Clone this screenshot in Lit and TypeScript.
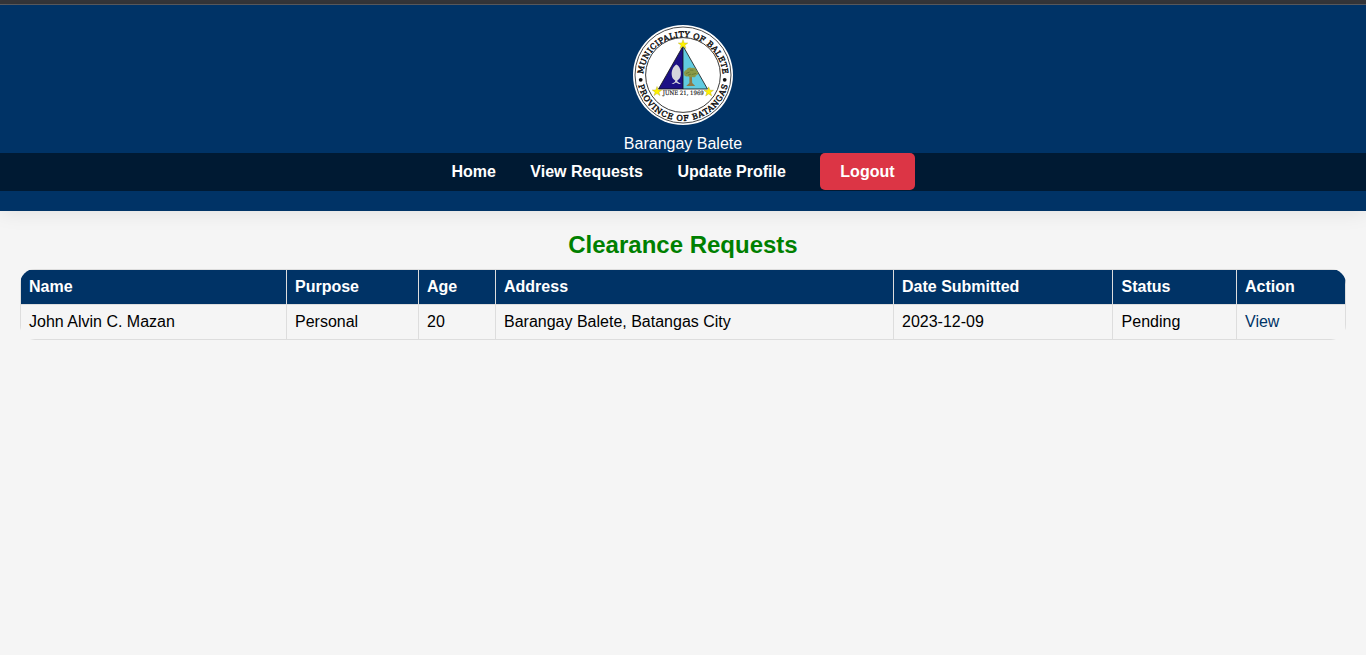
import { LitElement, html, css, svg } from "lit";
import { customElement } from "lit/decorators.js";

const star = (x: number, y: number) => svg`
  <path transform="translate(${x} ${y})" fill="#fff200" stroke="#a39b20" stroke-width=".35"
    d="M0-5 1.2-1.6 4.8-1.5 1.9.7 3 4.1 0 2.1-3 4.1-1.9.7-4.8-1.5-1.2-1.6Z"/>`;

@customElement("municipal-seal")
class MunicipalSeal extends LitElement {
  static styles = css`
    :host { display: block; width: 100px; height: 100px; }
    svg { display: block; }
    .ring { font: 7.8px "DejaVu Serif", serif; fill: #111; stroke: #111; stroke-width: 0.45px; }
    .date { font: 6px "DejaVu Serif", serif; fill: #111; stroke: #111; stroke-width: 0.15px; }
  `;
  render() {
    return html`<svg width="100" height="100" viewBox="0 0 100 100">
      <defs>
        <path id="upper" d="M10.2 52A39.8 39.8 0 1 1 89.8 52"/>
        <path id="lower" d="M4.2 50A45.8 45.8 0 0 0 95.8 50"/>
      </defs>
      <circle cx="50" cy="50" r="50" fill="#fff"/>
      <circle cx="50" cy="50" r="48" fill="none" stroke="#333" stroke-width=".9"/>
      <circle cx="50" cy="50" r="37.4" fill="none" stroke="#222" stroke-width=".9"/>
      <text class="ring" text-anchor="middle" textLength="119" lengthAdjust="spacing"><textPath href="#upper" startOffset="50%" textLength="119" lengthAdjust="spacing">MUNICIPALITY OF BALETE</textPath></text>
      <text class="ring" text-anchor="middle" textLength="123" lengthAdjust="spacing"><textPath href="#lower" startOffset="50%" textLength="123" lengthAdjust="spacing">PROVINCE OF BATANGAS</textPath></text>
      <circle cx="7.7" cy="54.8" r="1.9" fill="#111"/>
      <circle cx="91.7" cy="54.8" r="1.9" fill="#111"/>
      <path fill="#1c1085" d="M50 21V64H25.5Z"/>
      <path fill="#61cbe0" d="M50 21V64H74.5Z"/>
      <path fill="none" stroke="#111" stroke-width=".8" d="M50 21 25.5 64H74.5ZM50 21V64"/>
      <path fill="#d5d5dc" d="M43.3 39.5C40.6 41 38.4 45.5 38.7 49.5 38.9 53.3 41 55 42.3 55.4L41.8 57 38.5 59H40.4L43 57.6 46 59H48L44.3 56.6 44.5 55.3C47.2 54 48.2 50.8 47.8 47 47.4 43.3 45.8 40.6 43.3 39.5Z"/>
      <path fill="#8f7a45" d="M56.4 49H58.8L59.2 58 62.2 61H53.2L56.4 58Z"/>
      <path fill="#8a9a48" d="M51.2 49.2C50.4 47 52 45.3 53.6 44.8 54 42.8 57 41.8 59 43 61.6 42.4 63.6 44 63.4 45.8 66.2 47.2 65.4 50.2 62.8 50.4 63 52.2 60.4 53 59 51.8 57.4 52.6 56 52.2 55.2 51.2 53 52 51.2 51 51.2 49.2Z"/>
      <path fill="none" stroke="#53692c" stroke-width=".6" d="M53 48.5 56.6 47M58.6 49.6 63 48.4M57 45 60.4 45.2M55 50.2 58 49"/>
      <text class="date" x="50.3" y="69.8" text-anchor="middle" textLength="41" lengthAdjust="spacingAndGlyphs">JUNE 21, 1969</text>
      ${star(50, 19.5)}${star(24, 66.5)}${star(75.7, 66.8)}
    </svg>`;
  }
}

@customElement("app-root")
class AppRoot extends LitElement {
  static styles = css`
    :host {
      display: block;
      min-height: 100vh;
      background: #f5f5f5;
      color: #000;
      font: 16px/18px "Liberation Sans", Arial, sans-serif;
    }
    .edge { height: 4px; background: #35363a; border-bottom: 1px solid #5b5c60; }
    header {
      background: #003366;
      color: #fff;
      padding: 20px 0;
      box-shadow: 0 0 20px rgba(0, 0, 0, 0.1);
      display: flex;
      flex-direction: column;
      align-items: center;
    }
    .place { margin-top: 10px; line-height: 18px; }
    nav {
      align-self: stretch;
      height: 38px;
      display: flex;
      align-items: flex-start;
      justify-content: center;
      background: #001a33;
      font-weight: bold;
    }
    nav a { color: #fff; padding: 10px 0 9px; line-height: 18px; margin-right: 34.45px; }
    nav a.logout { background: #dc3545; border-radius: 5px; padding: 10px 20px 9px; margin: 0; }
    h2 {
      margin: 20px 0 10px;
      font-size: 24px;
      line-height: 28px;
      color: #008000;
      text-align: center;
    }
    table {
      width: 1326px;
      margin: 0 20px;
      table-layout: fixed;
      border-collapse: collapse;
      border-radius: 15px;
      overflow: hidden;
    }
    th, td { border: 1px solid #ddd; padding: 8px; text-align: left; height: 18px; line-height: 18px; }
    th:nth-child(6), td:nth-child(6) { padding-left: 8.6px; }
    th { background: #003366; color: #fff; }
    td a { color: #003366; }
  `;
  private columns: [string, number][] = [
    ["Name", 266], ["Purpose", 132], ["Age", 77], ["Address", 398],
    ["Date Submitted", 219], ["Status", 124], ["Action", 109],
  ];
  private requests = [
    ["John Alvin C. Mazan", "Personal", "20", "Barangay Balete, Batangas City", "2023-12-09", "Pending"],
  ];
  render() {
    return html`
      <div class="edge"></div>
      <header>
        <municipal-seal></municipal-seal>
        <div class="place">Barangay Balete</div>
        <nav><a>Home</a><a>View Requests</a><a>Update Profile</a><a class="logout">Logout</a></nav>
      </header>
      <h2>Clearance Requests</h2>
      <table>
        <colgroup>${this.columns.map(([, w]) => html`<col style="width:${w}px">`)}</colgroup>
        <thead><tr>${this.columns.map(([name]) => html`<th>${name}</th>`)}</tr></thead>
        <tbody>${this.requests.map((row) => html`<tr>${row.map((v) => html`<td>${v}</td>`)}<td><a>View</a></td></tr>`)}</tbody>
      </table>`;
  }
}
